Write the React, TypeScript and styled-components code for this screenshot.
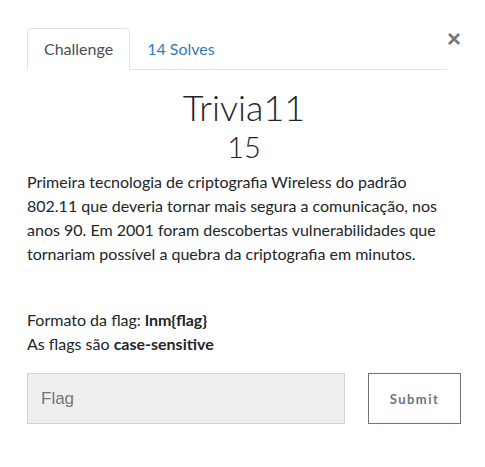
import React, { useState } from "react";
import styled, { createGlobalStyle, css } from "styled-components";

const GlobalStyle = createGlobalStyle`
  html, body {
    margin: 0;
    padding: 0;
    background: #ffffff;
  }
  body {
    font-family: Lato, "Noto Sans", sans-serif;
    color: #212529;
  }
  * {
    box-sizing: border-box;
  }
`;

const App = () => {
	const [tab, setTab] = useState("challenge");
	const [flag, setFlag] = useState("");

	return (
		<>
			<GlobalStyle />
			<Modal>
				<Header>
					<Tabs>
						<Tab active={tab === "challenge"} onClick={() => setTab("challenge")}>Challenge</Tab>
						<Tab active={tab === "solves"} onClick={() => setTab("solves")}>14 Solves</Tab>
					</Tabs>
					<Close aria-label="Close">×</Close>
				</Header>

				<Title>Trivia11</Title>
				<Value>15</Value>

				<Description>
					Primeira tecnologia de criptografia Wireless do padrão 802.11 que deveria tornar mais segura a
					comunicação, nos anos 90. Em 2001 foram descobertas vulnerabilidades que tornariam possível a
					quebra da criptografia em minutos.
				</Description>

				<Notes>
					Formato da flag: <b>lnm&#123;flag&#125;</b>
					<br />
					As flags são <b>case-sensitive</b>
				</Notes>

				<SubmitRow>
					<FlagInput placeholder="Flag" value={flag} onChange={(e) => setFlag(e.target.value)} />
					<SubmitButton>Submit</SubmitButton>
				</SubmitRow>
			</Modal>
		</>
	);
};

const Modal = styled.div`
  width: 461px;
  padding: 28px 0 0 27px;
`;

const Header = styled.div`
  display: flex;
  align-items: flex-start;
`;

const Tabs = styled.div`
  display: flex;
  width: 420px;
  border-bottom: 1px solid #dee2e6;
`;

const Tab = styled.div<{ active: boolean }>`
  margin-bottom: -1px;
  padding: 8px 16px;
  font-size: 16px;
  line-height: 24px;
  border: 1px solid transparent;
  border-top-left-radius: 4px;
  border-top-right-radius: 4px;
  color: #337ab7;
  cursor: pointer;
  ${props => props.active && css`
    color: #495057;
    background: #fff;
    border-color: #dee2e6 #dee2e6 #fff;
  `}
`;

const Close = styled.div`
  width: 14px;
  margin-top: 2px;
  text-align: center;
  font-family: "Liberation Sans", Arial, sans-serif;
  font-size: 24px;
  font-weight: 700;
  line-height: 18px;
  color: #777;
  cursor: pointer;
`;

const Title = styled.h2`
  margin: 16px 0 0;
  text-align: center;
  font-size: 36px;
  font-weight: 300;
  line-height: 43px;
  color: #212529;
`;

const Value = styled.h3`
  margin: 0;
  text-align: center;
  font-size: 29px;
  font-weight: 300;
  line-height: 35px;
  color: #1e2226;
`;

const Description = styled.p`
  width: 420px;
  margin: 6px 0 0;
  font-size: 16px;
  line-height: 24px;
`;

const Notes = styled.p`
  margin: 42px 0 0;
  font-size: 16px;
  line-height: 24px;

  b {
    font-weight: 700;
  }
`;

const SubmitRow = styled.div`
  display: flex;
  gap: 23px;
  margin-top: 17px;
`;

const FlagInput = styled.input`
  width: 318px;
  height: 51px;
  padding: 0 13px;
  border: 1px solid #ced4da;
  background: #efefef;
  font-family: "Liberation Sans", Arial, sans-serif;
  font-size: 17px;
  color: #495057;
  outline: none;

  ::placeholder {
    color: #7b8289;
  }
`;

const SubmitButton = styled.button`
  width: 93px;
  height: 51px;
  border: 1px solid #6c757d;
  background: #fff;
  font-family: Lato, sans-serif;
  font-size: 13px;
  font-weight: 700;
  letter-spacing: 1.5px;
  color: #6c757d;
  cursor: pointer;
`;

export default App;
